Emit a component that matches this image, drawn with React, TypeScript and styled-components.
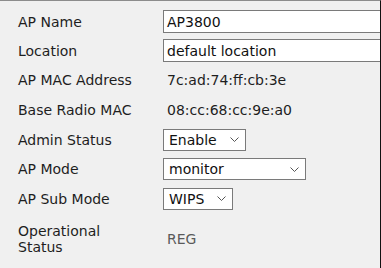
import React from "react";
import styled, { createGlobalStyle } from "styled-components";

const Global = createGlobalStyle`
  html, body { margin: 0; padding: 0; background: #f0f0f0; }
  body { font-family: "DejaVu Sans", Verdana, sans-serif; }
`;

const Panel = styled.div`
  width: 381px;
  height: 268px;
  box-sizing: border-box;
  border-top: 1px solid #8c8c8c;
  border-right: 1px solid #111;
  background: #f0f0f0;
  padding: 6px 0 0 18px;
  overflow: hidden;
`;

const Row = styled.div<{ $h: number; $pt?: number }>`
  display: grid;
  grid-template-columns: 145px 1fr;
  align-items: center;
  height: ${(p) => p.$h}px;
  padding-top: ${(p) => p.$pt ?? 0}px;
  box-sizing: border-box;
`;

const Label = styled.div`
  font-size: 14px;
  color: #1e1e1e;
  line-height: 16px;
`;

const Value = styled.div<{ $muted?: boolean }>`
  font-size: 14px;
  color: ${(p) => (p.$muted ? "#5a5a5a" : "#1e1e1e")};
  padding-left: 4px;
  line-height: 16px;
`;

const TextBox = styled.div`
  height: 23px;
  box-sizing: border-box;
  border: 1px solid #7a7a7a;
  border-right: none;
  background: #fff;
  font-size: 14px;
  color: #111;
  padding-left: 3px;
  display: flex;
  align-items: center;
`;

const SelectBox = styled.div<{ $w: number }>`
  width: ${(p) => p.$w}px;
  height: 22px;
  box-sizing: border-box;
  border: 1px solid #7a7a7a;
  background: #fff;
  font-size: 14px;
  color: #111;
  padding: 0 6px 0 5px;
  display: flex;
  align-items: center;
  justify-content: space-between;
`;

const Chevron = () => (
  <svg width="9" height="5" viewBox="0 0 9 5">
    <path d="M0.5 0.5 L4.5 4.5 L8.5 0.5" fill="none" stroke="#555" strokeWidth="1" />
  </svg>
);

const Select = ({ w, text }: { w: number; text: string }) => (
  <SelectBox $w={w}>
    <span>{text}</span>
    <Chevron />
  </SelectBox>
);

export default function App() {
  return (
    <>
      <Global />
      <Panel>
        <Row $h={29}>
          <Label>AP Name</Label>
          <TextBox>AP3800</TextBox>
        </Row>
        <Row $h={29}>
          <Label>Location</Label>
          <TextBox>default location</TextBox>
        </Row>
        <Row $h={30}>
          <Label>AP MAC Address</Label>
          <Value>7c:ad:74:ff:cb:3e</Value>
        </Row>
        <Row $h={30}>
          <Label>Base Radio MAC</Label>
          <Value>08:cc:68:cc:9e:a0</Value>
        </Row>
        <Row $h={29}>
          <Label>Admin Status</Label>
          <Select w={83} text="Enable" />
        </Row>
        <Row $h={30}>
          <Label>AP Mode</Label>
          <Select w={143} text="monitor" />
        </Row>
        <Row $h={29}>
          <Label>AP Sub Mode</Label>
          <Select w={70} text="WIPS" />
        </Row>
        <Row $h={42} $pt={10}>
          <Label>
            Operational
            <br />
            Status
          </Label>
          <Value $muted>REG</Value>
        </Row>
      </Panel>
    </>
  );
}
